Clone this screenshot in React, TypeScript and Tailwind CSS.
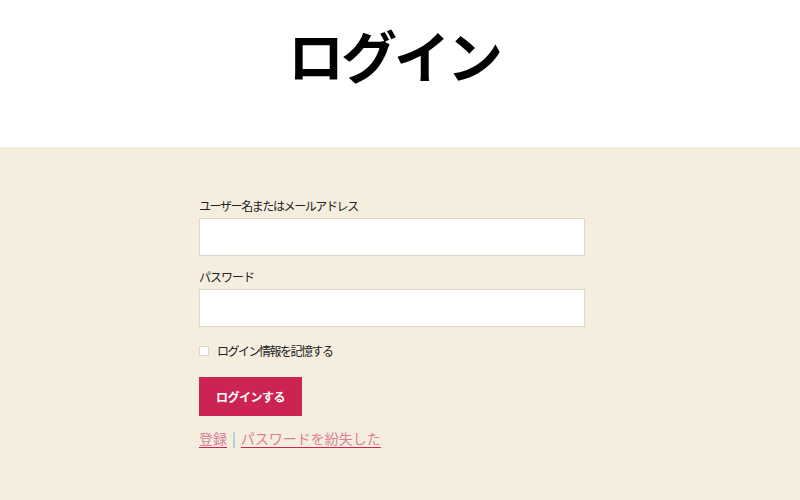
import React from "react";

export default function App() {
  return (
    <div className="w-[800px] h-[500px] overflow-hidden bg-[#f5eedf] font-['Noto_Sans_CJK_JP','Noto_Sans',sans-serif]">
      <header className="h-[147px] bg-white flex justify-center pr-[12px]">
        <h1 className="mt-[16px] text-[56px] leading-[76px] font-bold text-black tracking-[-3px]">ログイン</h1>
      </header>
      <main className="pl-[199px] pt-[49px] w-[585px] box-content">
        <form className="w-[386px] flex flex-col">
          <label className="text-[12px] leading-[20px] text-[#222] tracking-[-1.4px]">ユーザー名またはメールアドレス</label>
          <input type="text" className="mt-[2px] h-[38px] w-full bg-white border border-[#ddd6c9]" />
          <label className="mt-[11px] text-[12px] leading-[20px] text-[#222] tracking-[-1px]">パスワード</label>
          <input type="password" className="mt-[2px] h-[38px] w-full bg-white border border-[#ddd6c9]" />
          <div className="mt-[17px] flex items-center h-[14px]">
            <span className="w-[10px] h-[10px] bg-white border border-[#ddd6c9]" />
            <span className="ml-[8px] text-[12px] leading-[14px] text-[#222] tracking-[-1.5px]">ログイン情報を記憶する</span>
          </div>
          <button type="button" className="mt-[19px] w-[103px] h-[39px] bg-[#cc2452] text-white text-[12px] font-bold tracking-[-0.5px]">ログインする</button>
          <div className="mt-[11px] text-[14px] leading-[22px]">
            <a className="text-[#da8098] underline decoration-[#cc2452] underline-offset-[3px]">登録</a>
            <span className="text-[#6ab0d4] mx-[5px]">|</span>
            <a className="text-[#da8098] underline decoration-[#cc2452] underline-offset-[3px]">パスワードを紛失した</a>
          </div>
        </form>
      </main>
    </div>
  );
}
